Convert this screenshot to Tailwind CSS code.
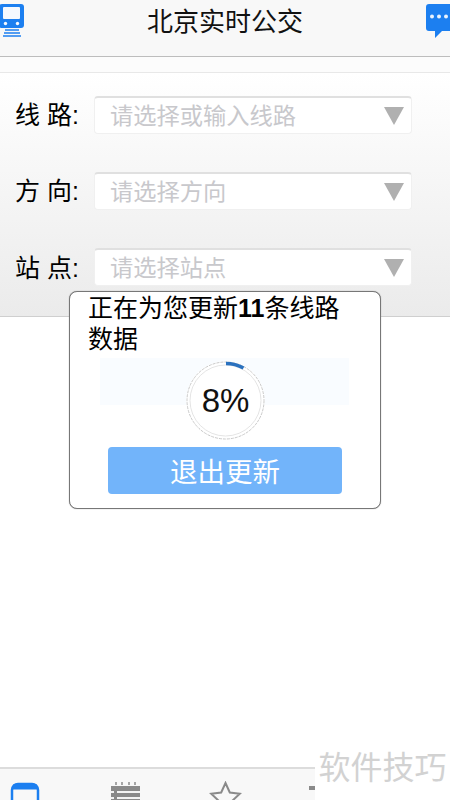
<!DOCTYPE html>
<html lang="zh-CN">
<head>
    <meta charset="UTF-8">
    <meta name="viewport" content="width=device-width, initial-scale=1.0">
    <title>北京实时公交</title>
    <script src="https://cdn.jsdelivr.net/npm/@tailwindcss/browser@4"></script>
</head>
<body class="bg-white font-['Liberation_Sans','Noto_Sans_CJK_SC',sans-serif]">
    <div class="relative h-[800px] w-[450px] overflow-hidden flex flex-col">
        <!-- Header -->
        <header class="h-[57px] shrink-0 bg-[#f8f8f8] border-b border-[#bdbdbd] flex items-start justify-between pt-[4px]">
            <svg class="w-[24px] h-[33px]" viewBox="0 0 24 33">
                <rect x="-1" y="0" width="25" height="24" rx="3" fill="#1c7ff0"/>
                <rect x="3" y="3" width="17" height="12" rx="1" fill="#f4f8fe"/>
                <circle cx="5.5" cy="19.5" r="1.7" fill="#f4f8fe"/>
                <circle cx="17.5" cy="19.5" r="1.7" fill="#f4f8fe"/>
                <path d="M5 26h14M4 29h16M3 32h18" stroke="#1c7ff0" stroke-width="1.3"/>
            </svg>
            <h1 class="text-[26px] leading-none text-[#111] mt-[5px]">北京实时公交</h1>
            <svg class="w-[24px] h-[34px]" viewBox="0 0 24 34">
                <path d="M3 0h21v27H16l-7 7v-7H3a3 3 0 0 1-3-3V3a3 3 0 0 1 3-3z" fill="#1c7ff0"/>
                <circle cx="6" cy="12.5" r="2" fill="#eaf3fe"/>
                <circle cx="13" cy="12.5" r="2" fill="#eaf3fe"/>
                <circle cx="20" cy="12.5" r="2" fill="#eaf3fe"/>
            </svg>
        </header>
        <div class="h-[16px] shrink-0 bg-[#fcfcfc] border-b border-[#e8e8e8]"></div>

        <!-- Query form -->
        <div class="h-[244px] shrink-0 bg-gradient-to-b from-white to-[#ebebeb] border-b border-[#cfcfcf] pt-[23px] pl-[15px] flex flex-col gap-[38px]">
            <div class="flex items-center h-[38px]">
                <span class="w-[79px] text-[25px] leading-none text-black whitespace-pre">线 路:</span>
                <div class="w-[318px] h-[38px] bg-white rounded-[4px] border border-[#f0f0f0] border-t-[2px] border-t-[#e0e0e0] flex items-center justify-between pl-[15px] pr-[7px]">
                    <span class="text-[23.25px] leading-none text-[#c8c8cc] pt-[2px]">请选择或输入线路</span>
                    <span class="w-0 h-0 border-l-[10px] border-r-[10px] border-t-[18px] border-l-transparent border-r-transparent border-t-[#b0b0b0]"></span>
                </div>
            </div>
            <div class="flex items-center h-[38px]">
                <span class="w-[79px] text-[25px] leading-none text-black whitespace-pre">方 向:</span>
                <div class="w-[318px] h-[38px] bg-white rounded-[4px] border border-[#f0f0f0] border-t-[2px] border-t-[#e0e0e0] flex items-center justify-between pl-[15px] pr-[7px]">
                    <span class="text-[23.25px] leading-none text-[#c8c8cc] pt-[2px]">请选择方向</span>
                    <span class="w-0 h-0 border-l-[10px] border-r-[10px] border-t-[18px] border-l-transparent border-r-transparent border-t-[#b0b0b0]"></span>
                </div>
            </div>
            <div class="flex items-center h-[38px]">
                <span class="w-[79px] text-[25px] leading-none text-black whitespace-pre pt-[3px]">站 点:</span>
                <div class="w-[318px] h-[38px] bg-white rounded-[4px] border border-[#f0f0f0] border-t-[2px] border-t-[#e0e0e0] flex items-center justify-between pl-[15px] pr-[7px]">
                    <span class="text-[23.25px] leading-none text-[#c8c8cc] pt-[3px]">请选择站点</span>
                    <span class="w-0 h-0 border-l-[10px] border-r-[10px] border-t-[18px] border-l-transparent border-r-transparent border-t-[#b0b0b0]"></span>
                </div>
            </div>
        </div>

        <!-- Bottom tabs -->
        <nav class="mt-auto h-[33px] shrink-0 bg-[#f8f8f8] border-t-[2px] border-[#dcdcdc] relative">
            <svg class="absolute left-[10px] top-[13px] w-[30px] h-[20px]" viewBox="0 0 30 20" fill="none">
                <rect x="2" y="2" width="26" height="24" rx="6" stroke="#1c7ff0" stroke-width="2.5"/>
                <path d="M3 5h24" stroke="#1c7ff0" stroke-width="5"/>
            </svg>
            <svg class="absolute left-[110px] top-[13px] w-[31px] h-[20px]" viewBox="0 0 31 20" fill="none">
                <path d="M6 0v3M12 0v3M19 0v3M25 0v3" stroke="#8a8a8a" stroke-width="1.5"/>
                <rect x="1" y="4" width="29" height="16" fill="#8a8a8a"/>
                <path d="M7 10h23M7 16h23M1 10h3M1 16h3" stroke="#f4f4f4" stroke-width="2"/>
            </svg>
            <svg class="absolute left-[209px] top-[12px] w-[33px] h-[21px]" viewBox="0 0 33 21" fill="none">
                <path d="M16.5 2l4.3 9.5 10 1.2-7.4 7 2 10.3-8.9-5.2-8.9 5.2 2-10.3-7.4-7 10-1.2z" stroke="#8a8a8a" stroke-width="2"/>
            </svg>
            <span class="absolute left-[309px] top-[17px] w-[6px] h-[4px] bg-[#8a8a8a]"></span>
        </nav>

        <!-- Update dialog -->
        <div class="absolute left-[69px] top-[291px] w-[312px] h-[218px] bg-white border border-[#777] shadow-[0_0_1px_#888] rounded-[8px] flex flex-col items-start">
            <p class="w-full pl-[18px] pr-[30px] pt-[1px] text-[25px] leading-[31px] text-black">正在为您更新<b>11</b>条线路数据</p>
            <div class="relative w-[249px] h-[47px] ml-[30px] mt-[3px] bg-[#f9fcff]">
                <div class="absolute left-[86px] top-[3px] w-[79px] h-[79px] rounded-full bg-white flex items-center justify-center">
                    <svg class="absolute inset-0" viewBox="0 0 79 79" fill="none">
                        <circle cx="39.5" cy="39.5" r="38.5" stroke="#bbb" stroke-width="0.8" stroke-dasharray="3 1"/>
                        <circle cx="39.5" cy="39.5" r="35.5" stroke="#ddd" stroke-width="0.8"/>
                        <path d="M40 2.5A37 37 0 0 1 57.5 7" stroke="#2a71bf" stroke-width="3.5"/>
                    </svg>
                    <span class="relative text-[33px] leading-none text-[#111]">8%</span>
                </div>
            </div>
            <button class="w-[234px] h-[47px] ml-[38px] mt-[42px] bg-[#72b4fa] rounded-[4px] text-white text-[27.5px] leading-none pt-[4px]">退出更新</button>
        </div>

        <!-- Watermark -->
        <div class="absolute right-0 bottom-0 w-[135px] h-[55px] bg-white flex items-center justify-center pb-[10px]">
            <span class="text-[32px] leading-none text-[#d2d2d2] whitespace-nowrap">软件技巧</span>
        </div>
    </div>
</body>
</html>
